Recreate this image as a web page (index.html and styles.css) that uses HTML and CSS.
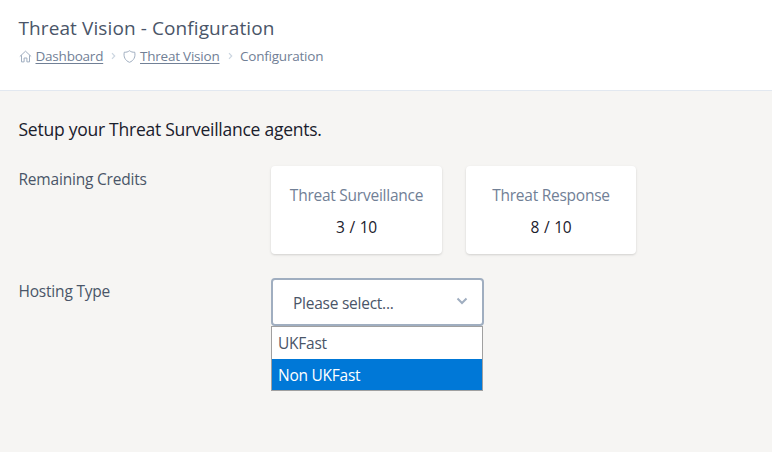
FILE: index.html
```html
<!DOCTYPE html>
<html lang="en">
<head>
<meta charset="utf-8">
<title>Threat Vision - Configuration</title>
<link rel="stylesheet" href="styles.css">
</head>
<body>
<header class="page-header">
  <h1 class="title">Threat Vision - Configuration</h1>
  <nav class="breadcrumb">
    <svg class="icon" viewBox="0 0 13 13"><path d="M.8 6.5 6.5 1.2l5.7 5.3M2.5 5.2v6.7h2.6V8h2.8v3.9h2.6V5.2"/></svg>
    <a class="crumb-dashboard" href="#">Dashboard</a>
    <svg class="separator" viewBox="0 0 5 8"><path d="m1 1.2 2.7 2.8L1 6.8"/></svg>
    <svg class="icon" viewBox="0 0 13 13"><path d="M6.5.7C5.1 1.8 3.4 2.4 1.3 2.2c-1 4.4.8 8.5 5.2 10.1 4.4-1.6 6.2-5.7 5.2-10.1C9.6 2.4 7.9 1.8 6.5.7Z"/></svg>
    <a class="crumb-vision" href="#">Threat Vision</a>
    <svg class="separator" viewBox="0 0 5 8"><path d="m1 1.2 2.7 2.8L1 6.8"/></svg>
    <span class="crumb-current">Configuration</span>
  </nav>
</header>
<main class="content">
  <h2 class="heading">Setup your Threat Surveillance agents.</h2>
  <section class="row credits">
    <div class="label">Remaining Credits</div>
    <div class="cards">
      <div class="card"><div class="card-name">Threat Surveillance</div><div class="card-value">3 / 10</div></div>
      <div class="card card-response"><div class="card-name">Threat Response</div><div class="card-value">8 / 10</div></div>
    </div>
  </section>
  <section class="row">
    <div class="label">Hosting Type</div>
    <div class="select">
      <div class="select-box"><span class="select-text">Please select...</span>
        <svg class="chevron" viewBox="0 0 12 8"><path d="m1.5 1.5 4.5 4.5 4.5-4.5"/></svg>
      </div>
      <div class="menu">
        <div class="option">UKFast</div>
        <div class="option option-active">Non UKFast</div>
      </div>
    </div>
  </section>
</main>
</body>
</html>
```
FILE: styles.css
```css
* { box-sizing: border-box; }
body {
  margin: 0;
  height: 452px;
  overflow: hidden;
  background: #f6f5f3;
  color: #4a5568;
  font: 15.5px/24px "Open Sans", "Noto Sans", sans-serif;
  letter-spacing: -0.25px;
}
h1, h2 { margin: 0; font-weight: 400; }
svg { display: block; fill: none; flex: none; }
.page-header {
  height: 91px;
  padding: 14px 18.5px 0;
  background: #fff;
  border-bottom: 1px solid #e2e8f0;
}
.title { font-size: 19px; line-height: 28px; letter-spacing: 0.1px; }
.breadcrumb {
  display: flex;
  align-items: center;
  height: 20px;
  margin-top: 4px;
  color: #718096;
  font-size: 13.5px;
  line-height: 20px;
  letter-spacing: -0.22px;
  white-space: nowrap;
}
.breadcrumb a { color: inherit; text-underline-offset: 2px; margin-left: 4px; }
.crumb-dashboard { width: 67.5px; }
.crumb-vision { width: 80px; }
.icon { width: 13px; height: 13px; stroke: #a0aec0; stroke-width: 1; }
.separator { width: 5px; height: 8px; margin: 0 7px 0 8px; stroke: #cbd5e0; stroke-width: 1.2; }
.content { padding: 24px 18.5px; }
.heading { color: #1a202c; font-size: 17.5px; line-height: 28px; letter-spacing: -0.25px; }
.row { display: flex; margin-top: 24px; }
.credits { margin-top: 23px; }
.label { width: 252.5px; padding-top: 1px; letter-spacing: -0.2px; }
.cards { display: flex; gap: 24px; }
.card {
  width: 171px;
  height: 88px;
  padding: 17px 0;
  background: #fff;
  border-radius: 4px;
  box-shadow: 0 1px 3px rgba(0, 0, 0, .1), 0 1px 2px rgba(0, 0, 0, .06);
  text-align: center;
}
.card-response { width: 170px; }
.card-name { color: #718096; }
.card-value { margin-top: 8px; color: #1a202c; word-spacing: 1px; }
.select { position: relative; width: 213px; }
.select-box {
  display: flex;
  align-items: center;
  justify-content: space-between;
  height: 48px;
  padding: 2px 14px 0 20px;
  background: #fff;
  border: 2px solid #a0aec0;
  border-radius: 4px;
}
.chevron { width: 12px; height: 8px; margin-top: -4px; stroke: #a0aec0; stroke-width: 2; }
.menu {
  position: absolute;
  top: 48px;
  left: 0;
  width: 212px;
  background: #fff;
  border: 1px solid #a0a0a0;
}
.option { height: 32px; padding: 0 6px; line-height: 33px; }
.option-active { height: 31px; background: #0078d7; color: #fff; }
```
